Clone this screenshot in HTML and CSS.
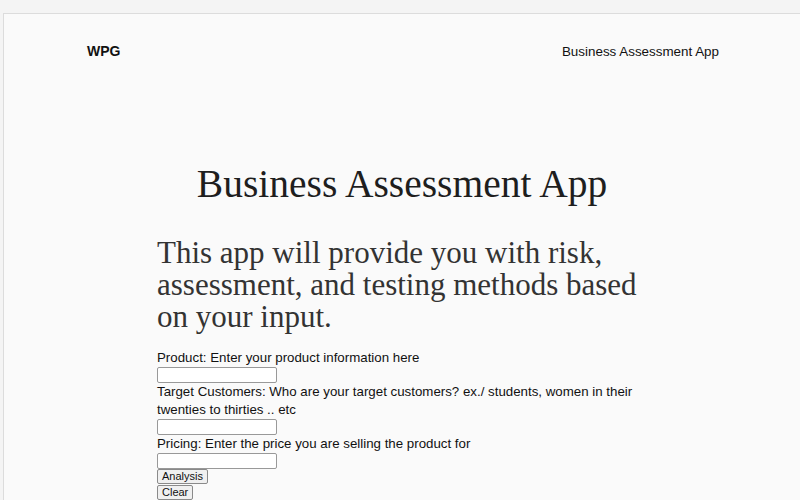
FILE: index.html
```html
<!DOCTYPE html>
<html>
<head>
<meta charset="utf-8">
<link rel="stylesheet" href="styles.css">
</head>
<body>
<div class="frame">
  <header class="topbar">
    <div class="brand">WPG</div>
    <div class="nav">Business Assessment App</div>
  </header>
  <main class="content">
    <h1 class="title">Business Assessment App</h1>
    <h2 class="lead">This app will provide you with risk, assessment, and testing methods based on your input.</h2>
    <form class="form">
      <label class="label">Product: Enter your product information here</label>
      <input class="field" type="text">
      <label class="label">Target Customers: Who are your target customers? ex./ students, women in their twenties to thirties .. etc</label>
      <input class="field" type="text">
      <label class="label">Pricing: Enter the price you are selling the product for</label>
      <input class="field" type="text">
      <button class="btn" type="button">Analysis</button>
      <button class="btn" type="button">Clear</button>
    </form>
  </main>
</div>
</body>
</html>
```
FILE: styles.css
```css
html, body {
  margin: 0;
  padding: 0;
  background: #f4f4f4;
  height: 100%;
  overflow: hidden;
}
.frame {
  margin: 13px 0 0 3px;
  border-top: 1px solid #dcdcdc;
  border-left: 1px solid #dcdcdc;
  background: #fafafa;
  min-height: 600px;
}
.topbar {
  display: flex;
  justify-content: space-between;
  align-items: center;
  padding: 29px 81px 0 83px;
  font-family: "Liberation Sans", Arial, sans-serif;
  font-size: 13.4px;
  color: #111;
}
.brand {
  font-weight: bold;
  font-size: 14px;
}
.content {
  width: 490px;
  margin: 0 0 0 153px;
}
.title {
  font-family: "Liberation Serif", "Times New Roman", serif;
  font-weight: normal;
  font-size: 39.5px;
  text-align: center;
  color: #1e1e1e;
  margin: 105px 0 0;
  line-height: 40px;
}
.lead {
  font-family: "Liberation Serif", "Times New Roman", serif;
  font-weight: normal;
  font-size: 31px;
  line-height: 32px;
  color: #333;
  margin: 33px 0 16px;
}
.form {
  display: flex;
  flex-direction: column;
  align-items: flex-start;
  font-family: "Liberation Sans", Arial, sans-serif;
  font-size: 13.3px;
  line-height: 18px;
  color: #111;
}
.field {
  width: 116px;
  height: 12px;
  padding: 1px;
  border: 1px solid #999;
  border-radius: 2px;
  background: #fff;
  margin: 0;
}
.btn {
  font-family: "Liberation Sans", Arial, sans-serif;
  font-size: 11px;
  line-height: 13px;
  padding: 0 4px;
  margin: 0 0 1px;
  border: 1px solid #8a8a8a;
  border-radius: 2px;
  background: #f0f0f0;
  color: #111;
}
```
